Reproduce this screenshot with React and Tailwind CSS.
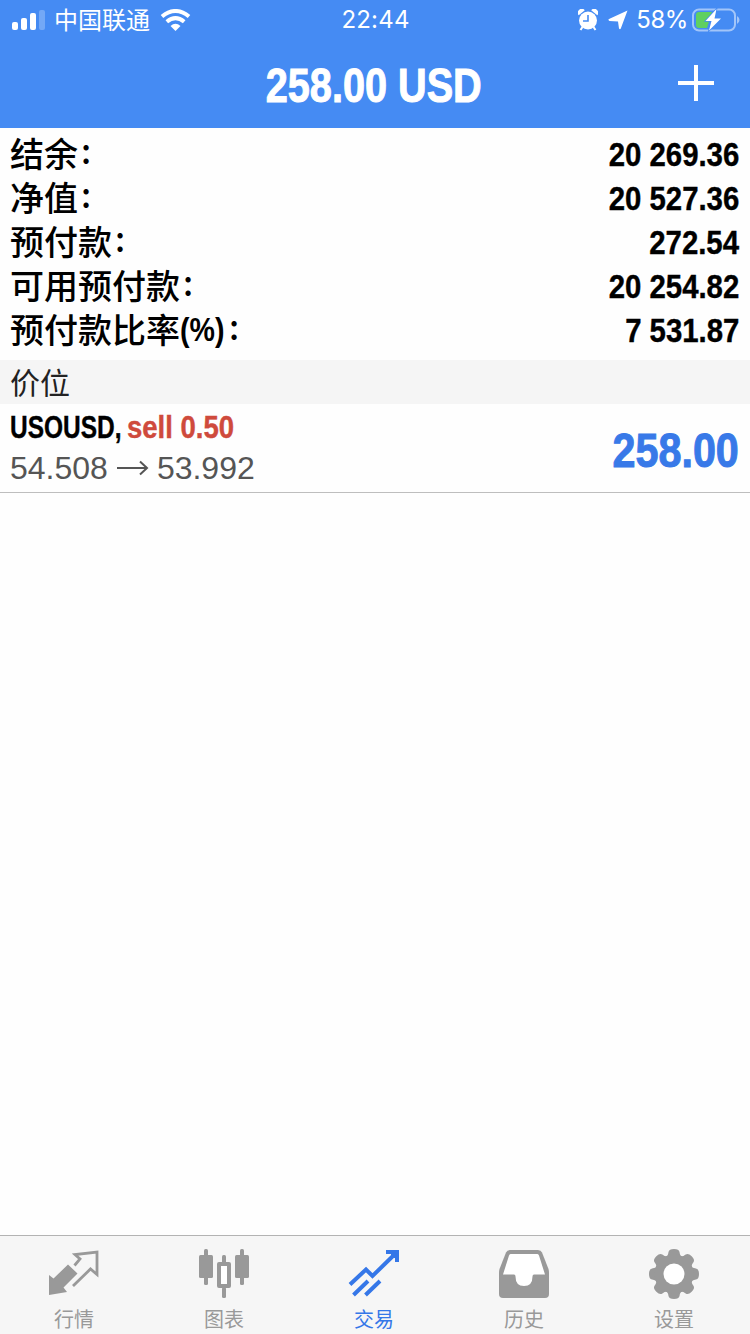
import clsx from "clsx";

const account = [
  { label: "结余", value: "20 269.36" },
  { label: "净值", value: "20 527.36" },
  { label: "预付款", value: "272.54" },
  { label: "可用预付款", value: "20 254.82" },
  { label: "预付款比率", suffix: "(%)", value: "7 531.87" },
];

const tabs = [
  { label: "行情", Icon: QuotesIcon },
  { label: "图表", Icon: ChartIcon },
  { label: "交易", Icon: TradeIcon, active: true },
  { label: "历史", Icon: HistoryIcon },
  { label: "设置", Icon: SettingsIcon },
];

function QuotesIcon() {
  return (
    <svg width="52" height="52" viewBox="0 0 52 52" fill="currentColor">
      <path d="M1 26L5.5 29.5L20 15.5L29.5 24.5L15.5 38.5L19 43L1 46Z" />
      <path
        d="M26.5 16.5L32 10L27 5.5L49 3V25.500L42.500 20L25 37"
        fill="none"
        stroke="currentColor"
        strokeWidth="2.800"
      />
    </svg>
  );
}

function ChartIcon() {
  return (
    <svg width="52" height="52" viewBox="0 0 52 52" fill="currentColor">
      <rect x="1" y="6" width="14" height="23" rx="1.500" />
      <rect x="6" y="0" width="4" height="36" rx="1.500" />
      <rect x="37" y="6" width="14" height="23" rx="1.500" />
      <rect x="42" y="0" width="4" height="36" rx="1.500" />
      <rect x="24" y="6" width="4" height="8" rx="1.500" />
      <rect x="24" y="38" width="4" height="11" rx="1.500" />
      <rect x="21" y="15" width="10" height="22" fill="white" stroke="currentColor" strokeWidth="4" strokeLinejoin="round" />
    </svg>
  );
}

function TradeIcon() {
  return (
    <svg width="52" height="52" viewBox="0 0 52 52" fill="none" stroke="currentColor" strokeWidth="4">
      <path d="M2 35.500L18 20.500L24.500 27L48 4" />
      <path d="M38 3H49V13" />
      <path d="M42 4L48 10V4Z" strokeWidth="1" fill="currentColor" />
      <path d="M5.500 46L20 32M17.500 46L32 32" />
    </svg>
  );
}

function HistoryIcon() {
  return (
    <svg width="52" height="52" viewBox="0 0 52 52">
      <path
        d="M12 1H40Q43 1 44 3.500L50.500 20Q51 22 51 24V45Q51 49 47 49H5Q1 49 1 45V24Q1 22 1.500 20L8 3.500Q9 1 12 1Z"
        fill="currentColor"
      />
      <path
        d="M12.500 5H39.500Q40.500 5 41 6.500L47 25.500H36Q34.500 25.500 34.500 27.500Q34.500 37 26 37Q17.500 37 17.500 27.500Q17.500 25.500 16 25.500H5L11 6.500Q11.500 5 12.500 5Z"
        fill="white"
      />
    </svg>
  );
}

function SettingsIcon() {
  return (
    <svg width="52" height="52" viewBox="0 0 52 52" fill="currentColor">
      {[0, 45, 90, 135, 180, 225, 270, 315].map((angle) => (
        <path
          key={angle}
          d="M17 8.500Q20 7.500 20.500 3Q21 0 26 0Q31 0 31.500 3Q32 7.500 35 8.500L26 20Z"
          transform={`rotate(${angle} 26 25)`}
        />
      ))}
      <circle cx="26" cy="25" r="19.500" />
      <circle cx="26" cy="25" r="10.500" fill="white" />
    </svg>
  );
}

function StatusBar() {
  return (
    <div className="flex h-10 items-center text-2xl leading-10">
      <div className="flex flex-1 items-center pl-3">
        <svg width="33" height="20" viewBox="0 0 33 20" fill="currentColor">
          <rect x="0" y="12" width="6" height="8" rx="2" />
          <rect x="9" y="8" width="6" height="12" rx="2" />
          <rect x="18" y="3" width="6" height="17" rx="2" />
          <rect x="27" y="0" width="6" height="20" rx="2" opacity="0.25" />
        </svg>
        <span className="-mt-0.5 ml-[9px] font-['Noto_Sans_CJK_SC',sans-serif]">中国联通</span>
        <svg className="ml-[10px]" width="31" height="22" viewBox="0 0 31 22" fill="none" stroke="currentColor" strokeWidth="4">
          <path d="M2 7.500Q15.500 -3.500 29 7.500" />
          <path d="M6.800 12.800Q15.500 5.500 24.200 12.800" />
          <path d="M15.500 22L10.500 17Q15.500 12.500 20.500 17Z" fill="currentColor" stroke="none" />
        </svg>
      </div>
      <span className="mr-px font-['Inter',sans-serif] tracking-[0.2px]">22:44</span>
      <div className="flex flex-1 items-center justify-end pr-[10px]">
        <svg width="20" height="22" viewBox="0 0 20 22" fill="currentColor">
          <circle cx="10" cy="11.500" r="9" />
          <path d="M0.700 6.200A3.600 3.600 0 0 1 6.800 1.300ZM19.300 6.200A3.600 3.600 0 0 0 13.200 1.300Z" />
          <path d="M4.500 18L2.500 21M15.500 18L17.500 21" stroke="currentColor" strokeWidth="2" />
          <path d="M10 6V12H5" fill="none" stroke="#458bf3" strokeWidth="1.600" />
        </svg>
        <svg className="ml-[10px]" width="20" height="20" viewBox="0 0 20 20" fill="currentColor">
          <path d="M19.500 0.500L12.800 18.500Q12 20 11 18.500L10 11.500L1.500 11Q-0.500 10 1 9Z" />
        </svg>
        <span className="ml-[8px] font-['Inter',sans-serif] tracking-[-0.4px]">58%</span>
        <svg className="ml-[4px]" width="48" height="24" viewBox="0 0 48 24">
          <rect x="1" y="1.500" width="42" height="21" rx="6" fill="none" stroke="white" strokeOpacity="0.5" strokeWidth="2" />
          <path d="M45 8Q47.500 9.500 47.500 12Q47.500 14.500 45 16Z" fill="white" fillOpacity="0.5" />
          <path d="M7 4H20L15 20H7Q4 20 4 17V7Q4 4 7 4Z" fill="#5fd060" />
          <path d="M24.500 1L13.500 13H19.500L17 22.500L29 10.500H22.500Z" fill="white" stroke="#458bf3" strokeWidth="1.500" paintOrder="stroke" />
        </svg>
      </div>
    </div>
  );
}

// A CJK label followed by its colon
function Label({ text, suffix }) {
  return (
    <span className="-mt-0.5 flex font-['Noto_Sans_CJK_SC',sans-serif] text-[34px] font-medium">
      {text}
      {suffix && (
        <span className="w-[46px] origin-left scale-x-[0.84] font-['Liberation_Sans',sans-serif] font-bold">
          {suffix}
        </span>
      )}
      <span className="-mt-[3px] ml-[3px]">:</span>
    </span>
  );
}

export default function App() {
  return (
    <div className="flex h-[1334px] w-[750px] flex-col bg-[#fefefe] font-['Liberation_Sans',sans-serif] text-black">
      <header className="h-32 bg-[#458bf3] text-white">
        <StatusBar />
        <div className="grid h-22 grid-cols-[1fr_auto_1fr] items-center">
          <span />
          <h1 className="mt-1 mr-[3px] scale-x-[0.826] text-[48px] font-bold leading-[84px] [-webkit-text-stroke:1px]">
            258.00 USD
          </h1>
          <svg className="mr-9 -mt-0.5 justify-self-end" width="36" height="36" viewBox="0 0 36 36" stroke="currentColor" strokeWidth="4">
            <path d="M0 18H36M18 0V36" />
          </svg>
        </div>
      </header>

      <section className="h-[232px] pt-1 pr-[11px] pl-[10px]">
        {account.map((row) => (
          <div key={row.label} className="flex h-11 items-center justify-between leading-[44px]">
            <Label text={row.label} suffix={row.suffix} />
            <span className="origin-right scale-x-[0.863] text-[34px] font-bold [-webkit-text-stroke:0.4px]">
              {row.value}
            </span>
          </div>
        ))}
      </section>

      <div className="h-11 bg-[#f5f5f5] pl-[10px] font-['Noto_Sans_CJK_SC',sans-serif] text-[30px] leading-[42px] text-[#222]">
        价位
      </div>

      <section className="flex h-[89px] items-center justify-between border-b border-[#bebebe] px-[10px]">
        <div className="-mt-0.5">
          <div className="flex text-[32px] font-bold leading-[42px] [-webkit-text-stroke:0.4px]">
            <span className="w-[117px] origin-left scale-x-[0.765]">USOUSD,</span>
            <span className="origin-left scale-x-[0.86] whitespace-nowrap text-[#cf4a3c]">sell 0.50</span>
          </div>
          <div className="-mt-px flex items-center text-[32px] leading-[42px] text-[#555]">
            54.508
            <svg className="mx-[9px]" width="32" height="16" viewBox="0 0 32 16" fill="none" stroke="currentColor" strokeWidth="2">
              <path d="M0 8H30M23 1.500L30 8L23 14.500" />
            </svg>
            <span className="-ml-px">53.992</span>
          </div>
        </div>
        <span className="mt-[6px] mr-px origin-right scale-x-[0.86] text-[48px] font-bold text-[#3879e8] [-webkit-text-stroke:1px]">
          258.00
        </span>
      </section>

      <main className="flex-1" />

      <nav className="flex h-[99px] border-t border-[#b3b3b3] bg-[#f6f6f6]">
        {tabs.map(({ label, Icon, active }) => (
          <div
            key={label}
            className={clsx(
              "flex flex-1 flex-col items-center pt-[13px] pr-0.5",
              active ? "text-[#3577e8]" : "text-[#999]"
            )}
          >
            <Icon />
            <span className="mt-[3px] font-['Noto_Sans_CJK_SC',sans-serif] text-[20px] leading-[30px]">{label}</span>
          </div>
        ))}
      </nav>
    </div>
  );
}
